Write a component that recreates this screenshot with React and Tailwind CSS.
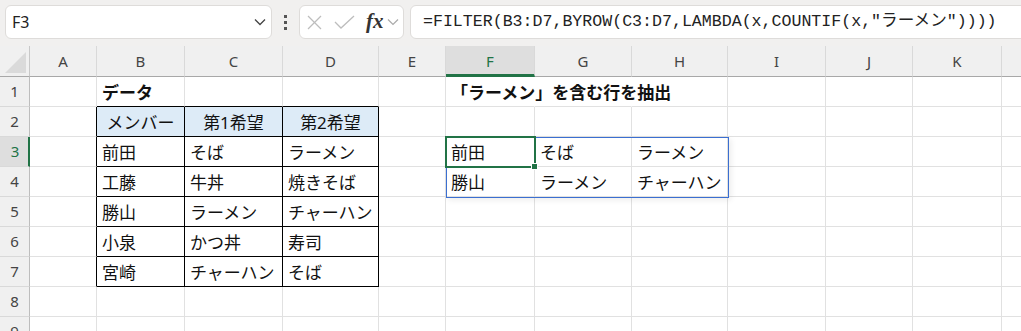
import React from "react";

const COLS = ["A", "B", "C", "D", "E", "F", "G", "H", "I", "J", "K", "L"];

const DATA = {
  B1: { t: "データ", bold: true },
  F1: { t: "「ラーメン」を含む行を抽出", bold: true },
  B2: { t: "メンバー", head: true },
  C2: { t: "第1希望", head: true },
  D2: { t: "第2希望", head: true },
  B3: { t: "前田" }, C3: { t: "そば" }, D3: { t: "ラーメン" },
  B4: { t: "工藤" }, C4: { t: "牛丼" }, D4: { t: "焼きそば" },
  B5: { t: "勝山" }, C5: { t: "ラーメン" }, D5: { t: "チャーハン" },
  B6: { t: "小泉" }, C6: { t: "かつ丼" }, D6: { t: "寿司" },
  B7: { t: "宮崎" }, C7: { t: "チャーハン" }, D7: { t: "そば" },
  F3: { t: "前田" }, G3: { t: "そば" }, H3: { t: "ラーメン" },
  F4: { t: "勝山" }, G4: { t: "ラーメン" }, H4: { t: "チャーハン" },
};

const ROWS = [1, 2, 3, 4, 5, 6, 7, 8, 9];

function Cell({ c, r }) {
  const ci = COLS.indexOf(c);
  const key = c + r;
  const d = DATA[key];
  const inTable = ci >= 1 && ci <= 3 && r >= 2 && r <= 7;
  const blackR = inTable || (ci === 0 && r >= 2 && r <= 7);
  const blackB = inTable || (ci >= 1 && ci <= 3 && r === 1);
  const noR = r === 1 && (c === "F" || c === "G");
  const rCls = blackR ? "border-r-black" : noR ? "border-r-transparent" : "border-r-[#e1e1e1]";
  const bCls = blackB ? "border-b-black" : "border-b-[#e1e1e1]";
  const bg = d && d.head ? "bg-[#ddebf7] justify-center" : "bg-white justify-start pl-[5px]";
  return (
    <div
      className={`h-[30px] border-r border-b ${rCls} ${bCls} ${bg} flex items-center overflow-visible whitespace-nowrap text-[17px] text-[#111]`}
    >
      {d ? (
        <span className={`${d.bold ? "font-bold" : "font-normal"} relative z-10 leading-none pt-[1px]`}>{d.t}</span>
      ) : null}
    </div>
  );
}

export default function App() {
  return (
    <div
      className="w-[1021px] h-[331px] overflow-hidden bg-white"
      style={{ fontFamily: '"Noto Sans", "Noto Sans CJK JP", sans-serif' }}
    >
      {/* Toolbar */}
      <div className="h-[46px] bg-[#f1f0ef] flex items-start pt-[5px] pl-[5px] overflow-hidden">
        <div className="w-[267px] h-[34px] shrink-0 bg-white border border-[#dedcda] rounded-[6px] flex items-center justify-between pl-[6px] pr-[5px]">
          <span className="text-[16px] text-[#222] leading-none" style={{ fontFamily: '"Noto Sans", sans-serif' }}>F3</span>
          <svg width="12" height="8" viewBox="0 0 12 8" fill="none">
            <polyline points="1,1.5 6,6.5 11,1.5" stroke="#444" strokeWidth="1.3" />
          </svg>
        </div>
        <div className="w-[27px] h-[34px] shrink-0 flex flex-col items-center justify-center gap-[3px]">
          <div className="w-[3px] h-[3px] bg-[#555]" />
          <div className="w-[3px] h-[3px] bg-[#555]" />
          <div className="w-[3px] h-[3px] bg-[#555]" />
        </div>
        <div className="w-[105px] h-[34px] shrink-0 bg-white border border-[#dedcda] rounded-[6px] flex items-center pl-[7px]">
          <svg width="15" height="15" viewBox="0 0 15 15" fill="none" className="shrink-0">
            <line x1="1" y1="1" x2="14" y2="14" stroke="#bdbdbd" strokeWidth="1.3" />
            <line x1="14" y1="1" x2="1" y2="14" stroke="#bdbdbd" strokeWidth="1.3" />
          </svg>
          <svg width="21" height="14" viewBox="0 0 21 14" fill="none" className="shrink-0 ml-[12px]">
            <polyline points="1,7 7,13 20,1" stroke="#bdbdbd" strokeWidth="1.3" />
          </svg>
          <span
            className="ml-[11px] text-[21px] italic font-bold text-[#333] leading-none -mt-[2px]"
            style={{ fontFamily: '"Liberation Serif", "DejaVu Serif", serif' }}
          >
            fx
          </span>
          <svg width="12" height="8" viewBox="0 0 12 8" fill="none" className="ml-[3px] shrink-0">
            <polyline points="1,1.5 6,6.5 11,1.5" stroke="#aaa" strokeWidth="1.2" />
          </svg>
        </div>
        <div className="w-[640px] h-[34px] shrink-0 ml-[6px] bg-white border border-[#dedcda] rounded-[6px] flex items-center pl-[12px]">
          <span
            className="text-[16.6px] text-[#222] whitespace-nowrap leading-none"
            style={{ fontFamily: '"Liberation Mono", "Noto Sans CJK JP", monospace' }}
          >
            =FILTER(B3:D7,BYROW(C3:D7,LAMBDA(x,COUNTIF(x,"ラーメン"))))
          </span>
        </div>
      </div>

      {/* Sheet */}
      <div className="relative">
        <div className="grid w-[1090px] grid-cols-[30px_67px_88px_98px_96px_67px_89px_97px_96px_98px_87px_89px_88px]">
          {/* header row */}
          <div className="h-[31px] bg-[#f0f0f0] border-r border-b border-r-[#c8c8c8] border-b-[#a8a8a8] relative">
            <svg width="30" height="30" viewBox="0 0 30 30" className="absolute left-0 top-0">
              <polygon points="26,6 26,27 5,27" fill="#dadada" />
            </svg>
          </div>
          {COLS.map((c) => (
            <div
              key={c}
              className={`h-[31px] flex items-center justify-center text-[15px] border-r border-r-[#d9d9d9] ${
                c === "F"
                  ? "bg-[#dedede] text-[#217346] border-b-[3px] border-b-[#217346] pt-[2px]"
                  : "bg-[#f0f0f0] text-[#444] border-b border-b-[#a8a8a8]"
              }`}
            >
              {c}
            </div>
          ))}
          {ROWS.map((r) => (
            <React.Fragment key={r}>
              <div
                className={`h-[30px] flex items-center justify-center text-[15px] border-b border-b-[#d9d9d9] ${
                  r === 3
                    ? "bg-[#dedede] text-[#217346] border-r-[2px] border-r-[#217346] pl-[2px]"
                    : "bg-[#f0f0f0] text-[#444] border-r border-r-[#bdbdbd]"
                }`}
              >
                {r}
              </div>
              {COLS.map((c) => (
                <Cell key={c + r} c={c} r={r} />
              ))}
            </React.Fragment>
          ))}
        </div>

        {/* spill range border */}
        <div className="absolute left-[446px] top-[91px] w-[283px] h-[61px] border border-[#3b6fd1] pointer-events-none shadow-[2px_2px_6px_rgba(0,0,0,0.08)]" />
        {/* active cell */}
        <div className="absolute left-[445px] top-[90px] w-[91px] h-[32px] border-2 border-[#217346] pointer-events-none" />
        <div className="absolute left-[531px] top-[117px] w-[7px] h-[7px] bg-[#217346] border border-white pointer-events-none" />
      </div>
    </div>
  );
}
